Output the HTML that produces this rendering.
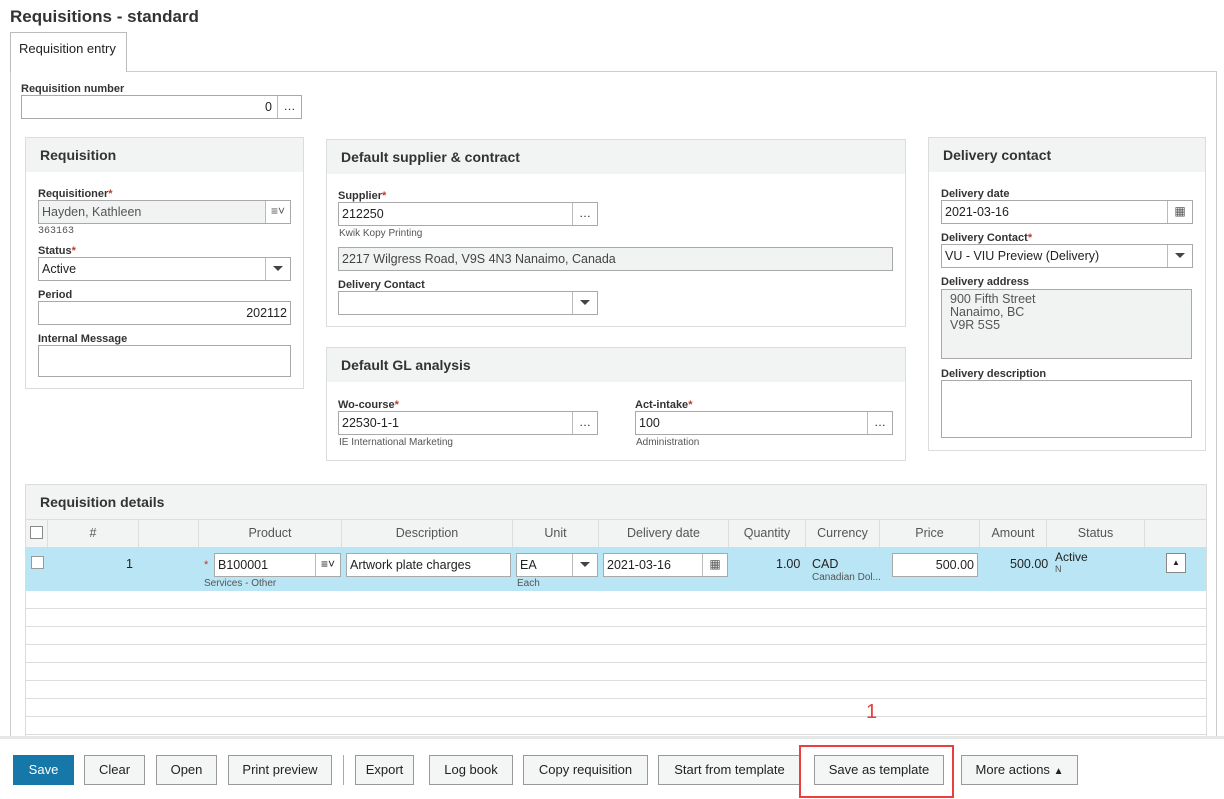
<!DOCTYPE html>
<html><head><meta charset="utf-8"><style>
*{box-sizing:border-box;margin:0;padding:0}
body{width:1224px;height:799px;position:relative;background:#fff;font-family:"Liberation Sans",Arial,sans-serif;color:#222;overflow:hidden}
.a{position:absolute}
.lbl{position:absolute;font-size:11px;font-weight:bold;color:#333}
.req{color:#c0392b}
.in{position:absolute;border:1px solid #a9a9a9;background:#fff;font-size:12.5px;padding:4px 3px;height:24px;line-height:15px;white-space:nowrap;overflow:hidden}
.gray{background:#f1f2f2}
.btn{position:absolute;border-left:1px solid #bbb;top:0;bottom:0;right:0;width:25px;background:#fff;text-align:center;font-size:12px;line-height:21px}
.sub{position:absolute;font-size:10px;color:#555}
.panel{position:absolute;border:1px solid #dcdcdc;background:#fff}
.ph{position:absolute;left:0;right:0;top:0;height:34px;background:#f2f3f3;font-weight:bold;font-size:14px;padding:9px 14px;color:#333}
.tri{display:inline-block;width:0;height:0;border-left:5px solid transparent;border-right:5px solid transparent;border-top:5px solid #444;vertical-align:middle}
.b{position:absolute;top:755px;height:30px;border:1px solid #999;background:#f4f5f5;font-size:13px;text-align:center;line-height:28px;color:#222}
.col{position:absolute;top:519px;height:28px;border-right:1px solid #ddd;font-size:12.5px;color:#555;text-align:center;line-height:28px}
.hl{position:absolute;left:26px;width:1180px;height:1px;background:#ddd}
</style></head><body>
<div class="a" style="left:10px;top:7px;font-size:17px;font-weight:bold;color:#333">Requisitions - standard</div>
<div class="a" style="left:10px;top:71px;width:1207px;height:728px;border-left:1px solid #ccc;border-right:1px solid #ccc;border-top:1px solid #ccc"></div>
<div class="a" style="left:10px;top:32px;width:117px;height:40px;border:1px solid #bbb;border-bottom:none;background:#fff;font-size:13px;padding:8px 8px">Requisition entry</div>

<div class="lbl" style="left:21px;top:83px">Requisition number</div>
<div class="in" style="left:21px;top:95px;width:281px;text-align:right;padding-right:29px">0<div class="btn" style="width:24px">…</div></div>

<!-- Requisition panel -->
<div class="panel" style="left:25px;top:137px;width:279px;height:252px"><div class="ph">Requisition</div></div>
<div class="lbl" style="left:38px;top:188px">Requisitioner<span class="req">*</span></div>
<div class="in gray" style="left:38px;top:200px;width:253px;color:#555">Hayden, Kathleen<div class="btn" style="background:#fff">≡˅</div></div>
<div class="sub" style="left:38px;top:226px;font-family:'Liberation Mono',monospace">363163</div>
<div class="lbl" style="left:38px;top:245px">Status<span class="req">*</span></div>
<div class="in" style="left:38px;top:257px;width:253px">Active<div class="btn"><span class="tri"></span></div></div>
<div class="lbl" style="left:38px;top:289px">Period</div>
<div class="in" style="left:38px;top:301px;width:253px;text-align:right">202112</div>
<div class="lbl" style="left:38px;top:333px">Internal Message</div>
<div class="in" style="left:38px;top:345px;width:253px;height:32px"></div>

<!-- Supplier -->
<div class="panel" style="left:326px;top:139px;width:580px;height:188px"><div class="ph">Default supplier &amp; contract</div></div>
<div class="lbl" style="left:338px;top:190px">Supplier<span class="req">*</span></div>
<div class="in" style="left:338px;top:202px;width:260px">212250<div class="btn">…</div></div>
<div class="sub" style="left:339px;top:228px">Kwik Kopy Printing</div>
<div class="in gray" style="left:338px;top:247px;width:555px;color:#444">2217 Wilgress Road, V9S 4N3 Nanaimo, Canada</div>
<div class="lbl" style="left:338px;top:279px">Delivery Contact</div>
<div class="in" style="left:338px;top:291px;width:260px"><div class="btn"><span class="tri"></span></div></div>

<!-- GL -->
<div class="panel" style="left:326px;top:347px;width:580px;height:114px"><div class="ph">Default GL analysis</div></div>
<div class="lbl" style="left:338px;top:399px">Wo-course<span class="req">*</span></div>
<div class="in" style="left:338px;top:411px;width:260px">22530-1-1<div class="btn">…</div></div>
<div class="sub" style="left:339px;top:437px">IE International Marketing</div>
<div class="lbl" style="left:635px;top:399px">Act-intake<span class="req">*</span></div>
<div class="in" style="left:635px;top:411px;width:258px">100<div class="btn">…</div></div>
<div class="sub" style="left:636px;top:437px">Administration</div>

<!-- Delivery -->
<div class="panel" style="left:928px;top:137px;width:278px;height:314px"><div class="ph">Delivery contact</div></div>
<div class="lbl" style="left:941px;top:188px">Delivery date</div>
<div class="in" style="left:941px;top:200px;width:252px">2021-03-16<div class="btn" style="color:#555">▦</div></div>
<div class="lbl" style="left:941px;top:232px">Delivery Contact<span class="req">*</span></div>
<div class="in" style="left:941px;top:244px;width:252px">VU - VIU Preview (Delivery)<div class="btn"><span class="tri"></span></div></div>
<div class="lbl" style="left:941px;top:276px">Delivery address</div>
<div class="in gray" style="left:941px;top:289px;width:251px;height:70px;padding:3px 8px;line-height:13px;color:#555;white-space:normal">900 Fifth Street<br>Nanaimo, BC<br>V9R 5S5</div>
<div class="lbl" style="left:941px;top:368px">Delivery description</div>
<div class="in" style="left:941px;top:380px;width:251px;height:58px"></div>

<!-- Details -->
<div class="panel" style="left:25px;top:484px;width:1182px;height:260px;border-bottom:none"><div class="ph">Requisition details</div></div>
<div class="a" style="left:26px;top:519px;width:1180px;height:28px;background:#f2f3f3;border-top:1px solid #ddd"></div>
<div class="col" style="left:25px;width:23px"><div class="a" style="left:5px;top:7px;width:13px;height:13px;border:1px solid #888;background:#fff"></div></div>
<div class="col" style="left:48px;width:91px">#</div>
<div class="col" style="left:139px;width:60px"></div>
<div class="col" style="left:199px;width:143px">Product</div>
<div class="col" style="left:342px;width:171px">Description</div>
<div class="col" style="left:513px;width:86px">Unit</div>
<div class="col" style="left:599px;width:130px">Delivery date</div>
<div class="col" style="left:729px;width:77px">Quantity</div>
<div class="col" style="left:806px;width:74px">Currency</div>
<div class="col" style="left:880px;width:100px">Price</div>
<div class="col" style="left:980px;width:67px">Amount</div>
<div class="col" style="left:1047px;width:98px">Status</div>
<div class="a" style="left:26px;top:547px;width:1180px;height:44px;background:#b9e5f4"></div>
<div class="a" style="left:31px;top:556px;width:13px;height:13px;border:1px solid #999;background:#fff"></div>
<div class="a" style="left:126px;top:557px;font-size:12.5px">1</div>
<div class="a" style="left:204px;top:559px;font-size:11px;color:#c0392b">*</div>
<div class="in" style="left:214px;top:553px;width:127px;height:24px">B100001<div class="btn">≡˅</div></div>
<div class="sub" style="left:204px;top:578px">Services - Other</div>
<div class="in" style="left:346px;top:553px;width:165px">Artwork plate charges</div>
<div class="in" style="left:516px;top:553px;width:82px">EA<div class="btn"><span class="tri"></span></div></div>
<div class="sub" style="left:517px;top:578px">Each</div>
<div class="in" style="left:603px;top:553px;width:125px">2021-03-16<div class="btn" style="color:#555">▦</div></div>
<div class="a" style="left:776px;top:557px;font-size:12.5px">1.00</div>
<div class="a" style="left:812px;top:557px;font-size:12.5px">CAD</div>
<div class="sub" style="left:812px;top:572px">Canadian Dol...</div>
<div class="in" style="left:892px;top:553px;width:86px;text-align:right">500.00</div>
<div class="a" style="left:1010px;top:557px;font-size:12.5px">500.00</div>
<div class="a" style="left:1055px;top:550px;font-size:12px">Active</div>
<div class="sub" style="left:1055px;top:564px;font-size:9px">N</div>
<div class="a" style="left:1166px;top:553px;width:20px;height:20px;border:1px solid #888;background:#fff;text-align:center;line-height:17px;font-size:8px">▲</div>
<div class="hl" style="top:608px"></div><div class="hl" style="top:626px"></div><div class="hl" style="top:644px"></div><div class="hl" style="top:662px"></div><div class="hl" style="top:680px"></div><div class="hl" style="top:698px"></div><div class="hl" style="top:716px"></div><div class="hl" style="top:734px"></div>

<div class="a" style="left:0;top:736px;width:1224px;height:63px;background:#fff;border-top:3px solid #e6e7e7"></div>
<div class="a" style="left:866px;top:701px;font-size:20px;color:#e83e3e">1</div>
<div class="b" style="left:13px;width:61px;background:#1578a8;border-color:#1578a8;color:#fff">Save</div>
<div class="b" style="left:84px;width:61px">Clear</div>
<div class="b" style="left:156px;width:61px">Open</div>
<div class="b" style="left:228px;width:104px">Print preview</div>
<div class="a" style="left:343px;top:755px;width:1px;height:30px;background:#aaa"></div>
<div class="b" style="left:355px;width:59px">Export</div>
<div class="b" style="left:429px;width:84px">Log book</div>
<div class="b" style="left:523px;width:125px">Copy requisition</div>
<div class="b" style="left:658px;width:143px">Start from template</div>
<div class="b" style="left:814px;width:130px">Save as template</div>
<div class="b" style="left:961px;width:117px">More actions <span style="font-size:10px">▲</span></div>
<div class="a" style="left:799px;top:745px;width:155px;height:53px;border:2px solid #e84040"></div>
</body></html>
